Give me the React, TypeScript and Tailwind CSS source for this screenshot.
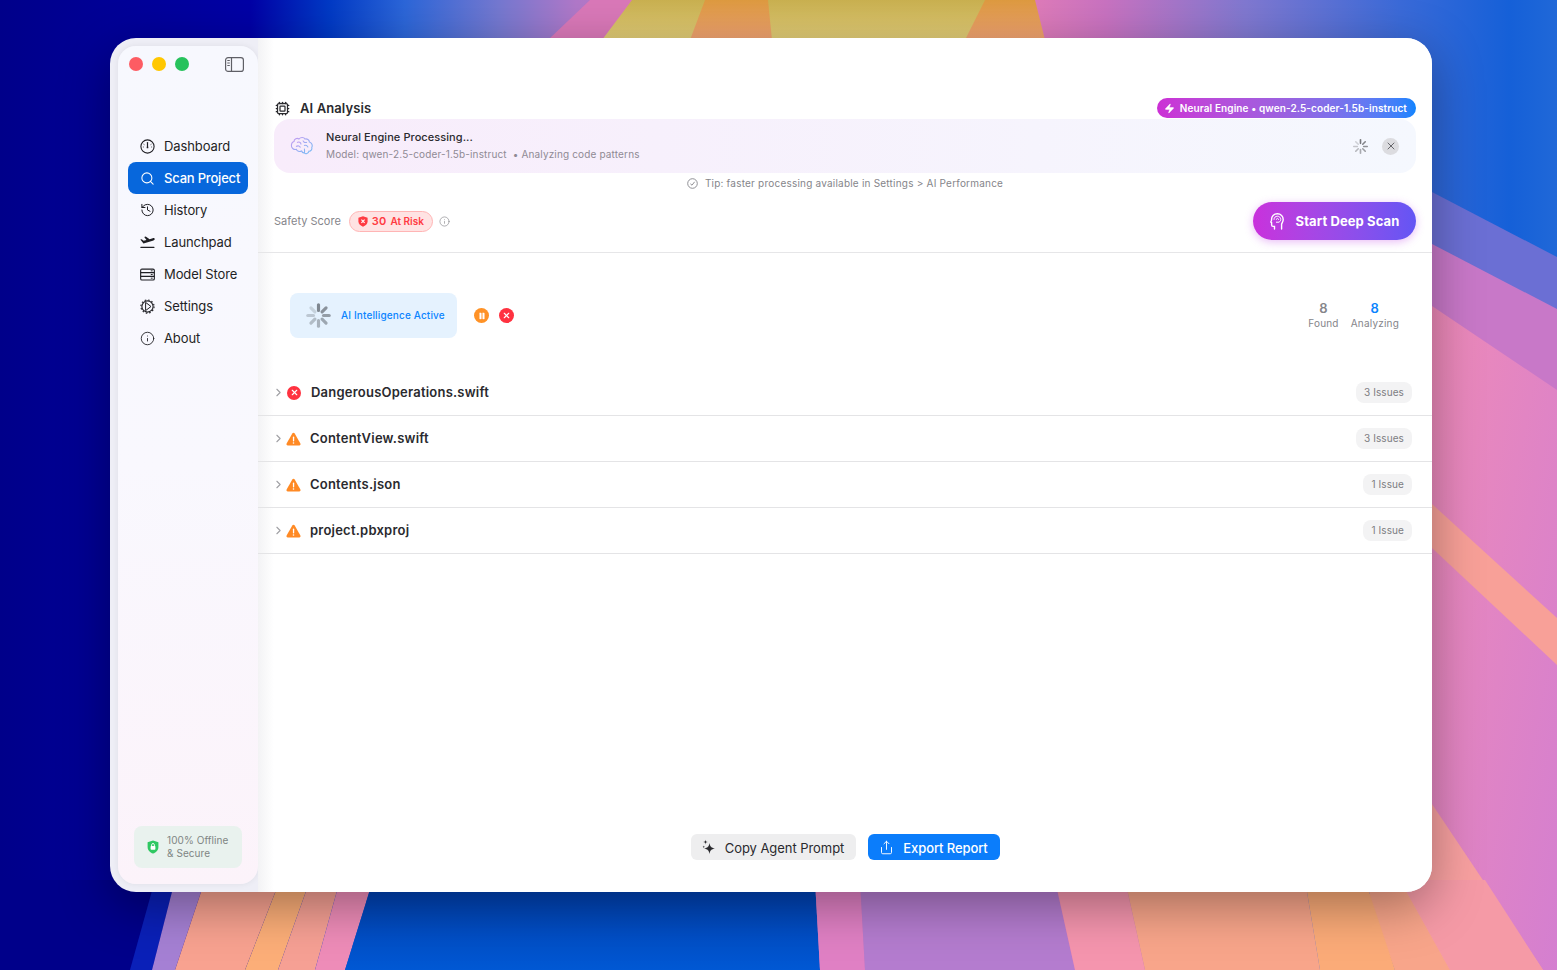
import { ChevronRight, Cpu, Zap, X, Pause, Info, Search, History, Share } from "lucide-react";
import type { ReactNode } from "react";

const files = [
  { name: "DangerousOperations.swift", issues: "3 Issues", level: "error" },
  { name: "ContentView.swift", issues: "3 Issues", level: "warning" },
  { name: "Contents.json", issues: "1 Issue", level: "warning" },
  { name: "project.pbxproj", issues: "1 Issue", level: "warning" },
];

const dashIcon = (
  <svg width="15" height="15" viewBox="0 0 15 15" fill="none" stroke="#1f1f24" strokeWidth="1.1">
    <circle cx="7.5" cy="7.5" r="6.6" />
    <path d="M7.5 8V3.6" strokeWidth="1.2" strokeLinecap="round" />
    <path d="M3.6 5.2l.8.5M11.4 5.2l-.8.5M2.9 8h.8M12.1 8h-.8" strokeWidth="0.9" />
    <circle cx="7.5" cy="8.4" r="0.9" fill="#1f1f24" stroke="none" />
  </svg>
);

const planeIcon = (
  <svg width="16" height="13" viewBox="0 0 16 13" fill="#1f1f24">
    <path d="M0.3 3.4 1.8 3 3.9 4.6 6.9 3.7 4.5 0.5 6.1 0.1 10.3 2.9 13.6 1.9C15 1.5 16 2.3 15.6 3.2 15.3 3.8 14.4 4.2 13.6 4.5L3.7 7.5 0.3 3.4Z" />
    <rect x="0.3" y="11" width="15.2" height="1.4" rx="0.5" />
  </svg>
);

const storeIcon = (
  <svg width="16" height="13" viewBox="0 0 16 13" fill="none" stroke="#1f1f24" strokeWidth="1.2">
    <rect x="0.7" y="0.7" width="14.6" height="11.6" rx="1.4" />
    <path d="M0.7 4.5H15.3M0.7 8.5H15.3" />
    <path d="M11.5 2.6H13.5M11.5 6.5H13.5M11.5 10.4H13.5" strokeWidth="1" />
  </svg>
);

const gearIcon = (
  <svg width="15" height="15" viewBox="0 0 15 15" fill="none" stroke="#1f1f24" strokeWidth="1.1">
    <circle cx="7.5" cy="7.5" r="5.6" />
    <circle cx="7.5" cy="7.5" r="6.6" strokeWidth="1.1" strokeDasharray="1.6 1.9" />
    <path d="M5.6 3.4 11 7.5 5.6 11.6M5.6 3.4V11.6" strokeWidth="1" />
  </svg>
);

const navItems: { label: string; icon: ReactNode; active?: boolean }[] = [
  { label: "Dashboard", icon: dashIcon },
  { label: "Scan Project", icon: <Search size={15} strokeWidth={1.7} />, active: true },
  { label: "History", icon: <History size={16} strokeWidth={1.6} /> },
  { label: "Launchpad", icon: planeIcon },
  { label: "Model Store", icon: storeIcon },
  { label: "Settings", icon: gearIcon },
  { label: "About", icon: <Info size={15} strokeWidth={1.4} /> },
];

function Wallpaper() {
  return (
    <svg className="absolute inset-0" width="1557" height="970" viewBox="0 0 1557 970">
      <defs>
        <linearGradient id="sky" x1="0" y1="0" x2="1" y2="0">
          <stop offset="0" stopColor="#00008a" />
          <stop offset="0.16" stopColor="#0000a5" />
          <stop offset="0.21" stopColor="#0038c4" />
          <stop offset="0.26" stopColor="#2c66d8" />
          <stop offset="0.32" stopColor="#7478d0" />
          <stop offset="0.37" stopColor="#b078c8" />
          <stop offset="0.66" stopColor="#e07cb8" />
          <stop offset="0.71" stopColor="#c872c0" />
          <stop offset="0.8" stopColor="#8078d0" />
          <stop offset="0.9" stopColor="#3a6ad8" />
          <stop offset="0.97" stopColor="#1560d8" />
          <stop offset="1" stopColor="#2068d8" />
        </linearGradient>
        <linearGradient id="yellow" x1="0" y1="0" x2="0" y2="1">
          <stop offset="0" stopColor="#c9b050" />
          <stop offset="1" stopColor="#e2cd78" />
        </linearGradient>
        <linearGradient id="amber" x1="0" y1="0" x2="0" y2="1">
          <stop offset="0" stopColor="#dd9a40" />
          <stop offset="1" stopColor="#f0a272" />
        </linearGradient>
        <linearGradient id="rightPink" x1="0" y1="0" x2="1" y2="1">
          <stop offset="0" stopColor="#ee8ab8" />
          <stop offset="1" stopColor="#d47fd0" />
        </linearGradient>
        <linearGradient id="deep" x1="0" y1="0" x2="0" y2="1">
          <stop offset="0" stopColor="#003fb0" />
          <stop offset="1" stopColor="#0058d4" />
        </linearGradient>
      </defs>
      <rect width="1557" height="970" fill="url(#sky)" />
      {/* top bands */}
      <polygon points="590,0 800,0 800,40 548,40" fill="#d978b8" />
      <polygon points="632,0 985,0 1040,40 602,40" fill="url(#yellow)" />
      <polygon points="705,0 768,0 772,40 690,40" fill="url(#amber)" />
      <polygon points="985,0 1035,0 1045,40 965,40" fill="url(#amber)" />
      {/* right side bands */}
      <polygon points="1432,192 1557,257 1557,330 1432,250" fill="#6b6fd4" />
      <polygon points="1432,244 1557,309 1557,400 1432,310" fill="#c878c8" />
      <polygon points="1432,306 1557,390 1557,970 1432,970" fill="url(#rightPink)" />
      <polygon points="1432,504 1557,618 1557,665 1432,548" fill="#f8a098" />
      <polygon points="1395,892 1432,804 1543,970 1395,970" fill="#f8a0a0" />
      <polygon points="1400,906 1440,970 1395,970 1365,892" fill="#fba878" />
      {/* bottom bands */}
      <polygon points="0,880 155,880 130,970 0,970" fill="#00008a" />
      <polygon points="155,880 175,880 152,970 130,970" fill="#0a20b8" />
      <polygon points="175,880 205,880 175,970 152,970" fill="#a580d4" />
      <polygon points="205,880 280,880 245,970 175,970" fill="#f8a290" />
      <polygon points="280,880 310,880 278,970 245,970" fill="#fcae78" />
      <polygon points="310,880 340,880 315,970 278,970" fill="#f6a094" />
      <polygon points="340,880 373,880 345,970 315,970" fill="#ee8cb8" />
      <polygon points="373,880 815,880 820,970 345,970" fill="url(#deep)" />
      <polygon points="815,880 860,880 865,970 820,970" fill="#e080c4" />
      <polygon points="860,880 1055,880 1075,970 865,970" fill="#b47ccf" />
      <polygon points="1055,880 1125,880 1145,970 1075,970" fill="#f595ae" />
      <polygon points="1125,880 1305,880 1320,970 1145,970" fill="#f8a58a" />
      <polygon points="1305,880 1365,880 1395,970 1320,970" fill="#fbab78" />
      <polygon points="1365,880 1400,880 1450,970 1395,970" fill="#f8a58a" />
      <polygon points="1400,880 1485,880 1543,970 1450,970" fill="#f59aa6" />
    </svg>
  );
}

function Spinner({ size, color, weight }: { size: number; color: string; weight: number }) {
  const spokes = [0, 45, 90, 135, 180, 225, 270, 315];
  return (
    <svg width={size} height={size} viewBox="0 0 24 24" fill="none">
      {spokes.map((a, i) => (
        <line key={a} x1="12" y1="2.5" x2="12" y2="7.5" stroke={color} strokeWidth={weight} strokeLinecap="round" opacity={1 - i * 0.1} transform={`rotate(${a} 12 12)`} />
      ))}
    </svg>
  );
}

function NavRow({ label, icon, active }: { label: string; icon: ReactNode; active?: boolean }) {
  return (
    <div className={`flex h-8 items-center gap-[9px] rounded-lg pl-[12px] text-[13px] tracking-[-0.1px] ${active ? "bg-[#0767dc] text-white" : "text-[#1f1f24]"}`}>
      <span className="flex w-[15px] justify-center">{icon}</span>
      <span className={`pt-[1px] ${active ? "font-medium tracking-[-0.2px]" : ""}`}>{label}</span>
    </div>
  );
}

function Sidebar() {
  return (
    <aside className="m-2 mr-0 flex w-[140px] flex-col rounded-[18px] bg-gradient-to-b from-[#f7f8fe] via-[#f9f8fe] to-[#fcf3fa] shadow-[0_0_6px_rgba(0,0,0,0.07)]">
      <div className="flex h-[25px] items-end justify-between pl-[11px] pr-[14px]">
        <div className="flex gap-[9px]">
          <span className="h-[14px] w-[14px] rounded-full bg-[#fd5c63]" />
          <span className="h-[14px] w-[14px] rounded-full bg-[#ffc700]" />
          <span className="h-[14px] w-[14px] rounded-full bg-[#27c25c]" />
        </div>
        <svg className="-mb-[1px]" width="19" height="15" viewBox="0 0 19 15" fill="none" stroke="#5f5f66" strokeWidth="1.2">
          <rect x="0.6" y="0.6" width="17.8" height="13.8" rx="2.5" />
          <path d="M6.5 0.6V14.4" />
          <path d="M2.3 3.5H4.8M2.3 6H4.8M2.3 8.5H4.8" strokeWidth="1" />
        </svg>
      </div>
      <nav className="mt-[59px] flex flex-col px-[10px]">
        {navItems.map((n) => (
          <NavRow key={n.label} {...n} />
        ))}
      </nav>
      <div className="mx-4 mb-4 mt-auto flex h-[42px] items-center gap-[8px] rounded-lg bg-[#e9f2ee] pl-[13px] text-[10px] leading-[13px] tracking-[0.08px] text-[#7f8583]">
        <svg width="12" height="14" viewBox="0 0 12 14">
          <path d="M6 0.4 11.4 2.2V7C11.4 10.2 9 12.6 6 13.6 3 12.6 0.6 10.2 0.6 7V2.2Z" fill="#2fc862" />
          <rect x="3.6" y="6" width="4.8" height="3.8" rx="0.7" fill="#ffffff" />
          <path d="M4.6 6V4.9C4.6 3 7.4 3 7.4 4.9V6" fill="none" stroke="#ffffff" strokeWidth="0.9" />
        </svg>
        <div>
          100% Offline
          <br />& Secure
        </div>
      </div>
    </aside>
  );
}

function FileRow({ name, issues, level }: { name: string; issues: string; level: string }) {
  return (
    <div className="flex h-[46px] shrink-0 items-center border-b border-[#e4e4e6] pl-[14px] pr-[20px]">
      <ChevronRight size={13} className={level === "error" ? "mr-[2px] text-[#a0a0a5]" : "mr-[1px] text-[#a0a0a5]"} strokeWidth={2} />
      {level === "error" ? (
        <span className="mr-[10px] flex h-[14px] w-[14px] items-center justify-center rounded-full bg-[#ff3240] text-white">
          <X size={9} strokeWidth={3} />
        </span>
      ) : (
        <svg className="mr-[9px]" width="15" height="14" viewBox="0 0 15 14">
          <path d="M7.5 0.8C7 0.8 6.6 1.1 6.3 1.6L0.6 11.4C0.1 12.3 0.7 13.4 1.8 13.4H13.2C14.3 13.4 14.9 12.3 14.4 11.4L8.7 1.6C8.4 1.1 8 0.8 7.5 0.8Z" fill="#ff8a25" />
          <rect x="6.9" y="4.6" width="1.3" height="4.8" rx="0.6" fill="#ffffff" />
          <circle cx="7.5" cy="11" r="0.8" fill="#ffffff" />
        </svg>
      )}
      <span className="text-[13px] font-semibold tracking-[0.22px] text-[#2a2a2e]">{name}</span>
      <span className="ml-auto flex h-[21px] items-center rounded-lg bg-[#f3f3f4] px-2 text-[10px] tracking-[0.1px] text-[#7d7d82]">{issues}</span>
    </div>
  );
}

export default function App() {
  return (
    <div className="relative h-[970px] w-[1557px] overflow-hidden font-['Inter',sans-serif]">
      <Wallpaper />
      <div className="relative pl-[110px] pt-[38px]">
        <div className="flex h-[854px] w-[1322px] overflow-hidden rounded-[26px] bg-[#eeeef6] shadow-[0_14px_50px_rgba(0,0,0,0.35)]">
          <Sidebar />
          <main className="flex min-w-0 flex-1 flex-col bg-[linear-gradient(90deg,#f3f3f5,#ffffff_16px)] pt-[60px]">
            <div className="px-4">
              <div className="flex h-[20px] items-center justify-between">
                <div className="flex items-center gap-[10px] text-[13px] font-semibold tracking-[0.1px] text-[#2a2a2e]">
                  <Cpu size={15} strokeWidth={2} className="ml-[1px]" />
                  <span className="pt-[1px]">AI Analysis</span>
                </div>
                <div className="flex h-[20px] items-center gap-[5px] rounded-full bg-gradient-to-r from-[#cc2fd5] via-[#9a62e0] to-[#0b84fe] pl-[7px] pr-[9px] text-[10px] font-semibold tracking-[0.1px] text-white">
                  <Zap size={11} fill="white" strokeWidth={1} />
                  Neural Engine • qwen-2.5-coder-1.5b-instruct
                </div>
              </div>
              <div className="mt-[1px] flex h-[54px] items-center rounded-2xl bg-gradient-to-r from-[#f8ecfb] to-[#f5f8fe] pl-[16px] pr-[17px]">
                <svg width="24" height="20" viewBox="0 0 24 20" fill="none" stroke="url(#brainStroke)" strokeWidth="1.1">
                  <defs>
                    <linearGradient id="brainStroke" x1="0" y1="0" x2="1" y2="1">
                      <stop offset="0" stopColor="#c79af0" />
                      <stop offset="1" stopColor="#74bdf5" />
                    </linearGradient>
                  </defs>
                  <path d="M4 5.5C4 3 7 1.6 9 3 10.4 1 14 1 15 3 17 2.4 19.4 3.8 19.4 6 21.8 6.6 23 9.4 21.8 11.4 22.4 13.6 20.8 15.4 19 15.2 18.4 17.6 15.4 18.6 14.4 16.8 13 17 12 16.2 11.6 15 9.6 16 7 15.4 6.4 13.4 3.6 14 1 11.8 1.4 9 1.6 7 2.6 5.8 4 5.5Z" />
                  <path d="M7 6.5C9 5.4 11 6.4 11 8.4M13 4.5C13.4 6.4 15.4 7 17 6.2M6 10.5C8 9.2 10 10 10.4 11.6M14 9.6C15.6 8.8 17.6 9.6 18 11.4M14.4 12.6C14.6 14 14.6 15.4 14.4 16.8" />
                </svg>
                <div className="ml-[12px] pb-[2px]">
                  <div className="text-[11px] font-medium leading-[16px] tracking-[0.07px] text-[#2a2a2e]">Neural Engine Processing...</div>
                  <div className="mt-[2px] text-[10px] leading-[14px] tracking-[0.15px] text-[#8f8a94]">Model: qwen-2.5-coder-1.5b-instruct&nbsp; • Analyzing code patterns</div>
                </div>
                <div className="ml-auto flex items-center gap-[13px]">
                  <Spinner size={17} color="#77777c" weight={2.3} />
                  <span className="flex h-[17px] w-[17px] items-center justify-center rounded-full bg-[#dcdce0] text-[#66666b]">
                    <X size={12} strokeWidth={2} />
                  </span>
                </div>
              </div>
              <div className="flex h-[20px] items-center justify-center gap-[7px] text-[10px] tracking-[0.21px] text-[#85858a]">
                <svg width="11" height="11" viewBox="0 0 11 11" fill="none" stroke="#85858a" strokeWidth="0.9">
                  <circle cx="5.5" cy="5.5" r="4.8" />
                  <path d="M3.4 5.8 5 7.2 7.6 3.8" />
                </svg>
                Tip: faster processing available in Settings &gt; AI Performance
              </div>
              <div className="mt-[9px] flex h-[38px] items-center">
                <span className="text-[11px] text-[#85858a]">Safety Score</span>
                <span className="ml-[8px] flex h-[21px] items-center gap-[4px] rounded-full border border-[#ffb5b5] bg-[#ffe3e3] pl-[8px] pr-[8px] text-[10px] font-semibold text-[#ff3b42]">
                  <svg width="10" height="11" viewBox="0 0 10 11">
                    <path d="M5 0.3 9.6 1.8V5.5C9.6 8 7.4 9.8 5 10.7 2.6 9.8 0.4 8 0.4 5.5V1.8Z" fill="#ff3b42" />
                    <path d="M3.4 3.7 6.6 6.9M6.6 3.7 3.4 6.9" stroke="#ffffff" strokeWidth="1.1" />
                  </svg>
                  <span className="text-[11px] tracking-[0.2px]">30</span>
                  <span>At Risk</span>
                </span>
                <Info size={11} strokeWidth={1.4} className="ml-[6px] text-[#85858a]" />
                <div className="ml-auto flex h-[38px] w-[163px] items-center justify-center gap-[12px] rounded-full bg-gradient-to-r from-[#c930dc] to-[#6355f4] text-[13px] font-bold tracking-[0.1px] text-white shadow-[0_2px_8px_rgba(190,60,230,0.35)]">
                  <svg width="14" height="17" viewBox="0 0 14 17" fill="none" stroke="#ffffff" strokeWidth="1.4" strokeLinecap="round">
                    <path d="M4.5 16V13.4H3C2 13.4 1.6 12.6 1.6 11.8V9.6L0.8 9C1 8.4 1.5 7.6 1.6 7 1.2 3.2 4 0.8 7.4 0.8 10.8 0.8 13.2 3.2 13.2 6.4 13.2 8.6 12 9.8 11.6 11V16" />
                    <path d="M4 6.4C4 4.6 5.4 3.2 7.4 3.2 9.2 3.2 10.8 4.6 10.8 6.4 10.8 7.6 10 8.6 9 9.2H6.4M6.4 6.4C6.4 5.8 6.9 5.4 7.4 5.4 8 5.4 8.6 5.9 8.6 6.6" strokeWidth="1" />
                  </svg>
                  <span className="pt-[1px]">Start Deep Scan</span>
                </div>
              </div>
            </div>
            <div className="mt-[12px] h-px shrink-0 bg-[#e6e6e8]" />
            <div className="mt-10 flex h-[45px] shrink-0 items-center pl-[32px] pr-[33px]">
              <div className="flex h-[45px] w-[167px] items-center gap-[9px] rounded-lg bg-[#e5f2fe] pl-[15px] text-[10px] font-medium tracking-[0.15px] text-[#0b84fe]">
                <Spinner size={27} color="#7f8790" weight={2.8} />
                AI Intelligence Active
              </div>
              <span className="ml-[17px] flex h-[15px] w-[15px] items-center justify-center rounded-full bg-[#ff9226] text-white">
                <Pause size={8} fill="white" strokeWidth={1} />
              </span>
              <span className="ml-[10px] flex h-[15px] w-[15px] items-center justify-center rounded-full bg-[#ff3240] text-white">
                <X size={9} strokeWidth={3} />
              </span>
              <div className="ml-auto flex gap-[12px] text-center text-[10px] tracking-[0.2px] text-[#85858a]">
                <div>
                  <div className="-mt-[1px] text-[13px] font-semibold leading-[16px]">8</div>
                  <div className="leading-[14px]">Found</div>
                </div>
                <div>
                  <div className="-mt-[1px] text-[13px] font-semibold leading-[16px] text-[#0b84fe]">8</div>
                  <div className="leading-[14px]">Analyzing</div>
                </div>
              </div>
            </div>
            <div className="mt-[32px] flex flex-col">
              {files.map((f) => (
                <FileRow key={f.name} {...f} />
              ))}
            </div>
            <div className="mb-[32px] mt-auto flex justify-center gap-3 text-[13px]">
              <div className="flex h-[26px] w-[165px] items-center justify-center gap-[9px] rounded-md bg-[#eeeeef] tracking-[-0.05px] text-[#2a2a2e]">
                <svg width="14" height="16" viewBox="0 0 14 16" fill="#2a2a2e">
                  <path d="M7.5 4C8.1 7.6 9.2 8.8 13 9.5 9.2 10.2 8.1 11.4 7.5 15 6.9 11.4 5.8 10.2 2 9.5 5.8 8.8 6.9 7.6 7.5 4Z" />
                  <path d="M3.5 0.8C3.7 2.4 4.2 2.9 5.8 3.1 4.2 3.3 3.7 3.8 3.5 5.4 3.3 3.8 2.8 3.3 1.2 3.1 2.8 2.9 3.3 2.4 3.5 0.8Z" />
                  <path d="M1.8 6.6C1.9 7.5 2.2 7.8 3.1 7.9 2.2 8 1.9 8.3 1.8 9.2 1.7 8.3 1.4 8 0.5 7.9 1.4 7.8 1.7 7.5 1.8 6.6Z" />
                </svg>
                <span className="pt-[4px]">Copy Agent Prompt</span>
              </div>
              <div className="flex h-[26px] w-[132px] items-center justify-center gap-[9px] rounded-md bg-[#0b7dfb] font-medium text-white">
                <Share size={15} strokeWidth={1.5} />
                <span className="pt-[4px] tracking-[-0.1px]">Export Report</span>
              </div>
            </div>
          </main>
        </div>
      </div>
    </div>
  );
}
